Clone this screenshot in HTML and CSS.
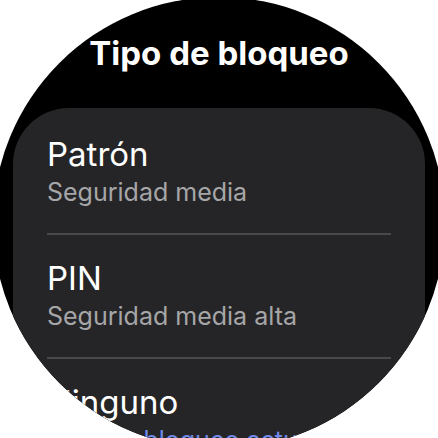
FILE: index.html
```html
<!DOCTYPE html>
<html lang="es">
<head>
  <meta charset="UTF-8">
  <meta name="viewport" content="width=device-width, initial-scale=1.0">
  <title>Tipo de bloqueo</title>
  <link rel="stylesheet" href="styles.css">
</head>
<body>
  <div class="watch">
    <h1 class="title">Tipo de bloqueo</h1>
    <ul class="card">
      <li class="item">
        <div class="item-name">Patrón</div>
        <div class="item-sub">Seguridad media</div>
      </li>
      <li class="item">
        <div class="item-name">PIN</div>
        <div class="item-sub">Seguridad media alta</div>
      </li>
      <li class="item">
        <div class="item-name">Ninguno</div>
        <div class="item-sub current">Tipo de bloqueo actual</div>
      </li>
    </ul>
  </div>
</body>
</html>
```

FILE: styles.css
```css
html, body { overflow: hidden; }
body { margin: 0; width: 438px; height: 438px; background: #fff; font-family: Inter, Roboto, sans-serif; }
.watch { width: 452px; height: 452px; margin: -3px 0 0 -7px; border-radius: 50%; background: #000; overflow: hidden; }
.title { margin: 0; padding-top: 36px; height: 111px; box-sizing: border-box; font-size: 33px; line-height: 40px; font-weight: 700; color: #fff; text-align: center; }
.card { list-style: none; margin: 0 20px; padding: 26px 0 0; background: #252527; border-radius: 56px 56px 0 0; }
.item { margin: 0 34px; padding-bottom: 23px; border-bottom: 2px solid #49494b; }
.item + .item { padding-top: 23px; }
.item-name { font-size: 33px; line-height: 40px; color: #fff; }
.item-sub { font-size: 25px; line-height: 36px; color: #a6a6a8; }
.item-sub.current { color: #6f8ae8; }
```
